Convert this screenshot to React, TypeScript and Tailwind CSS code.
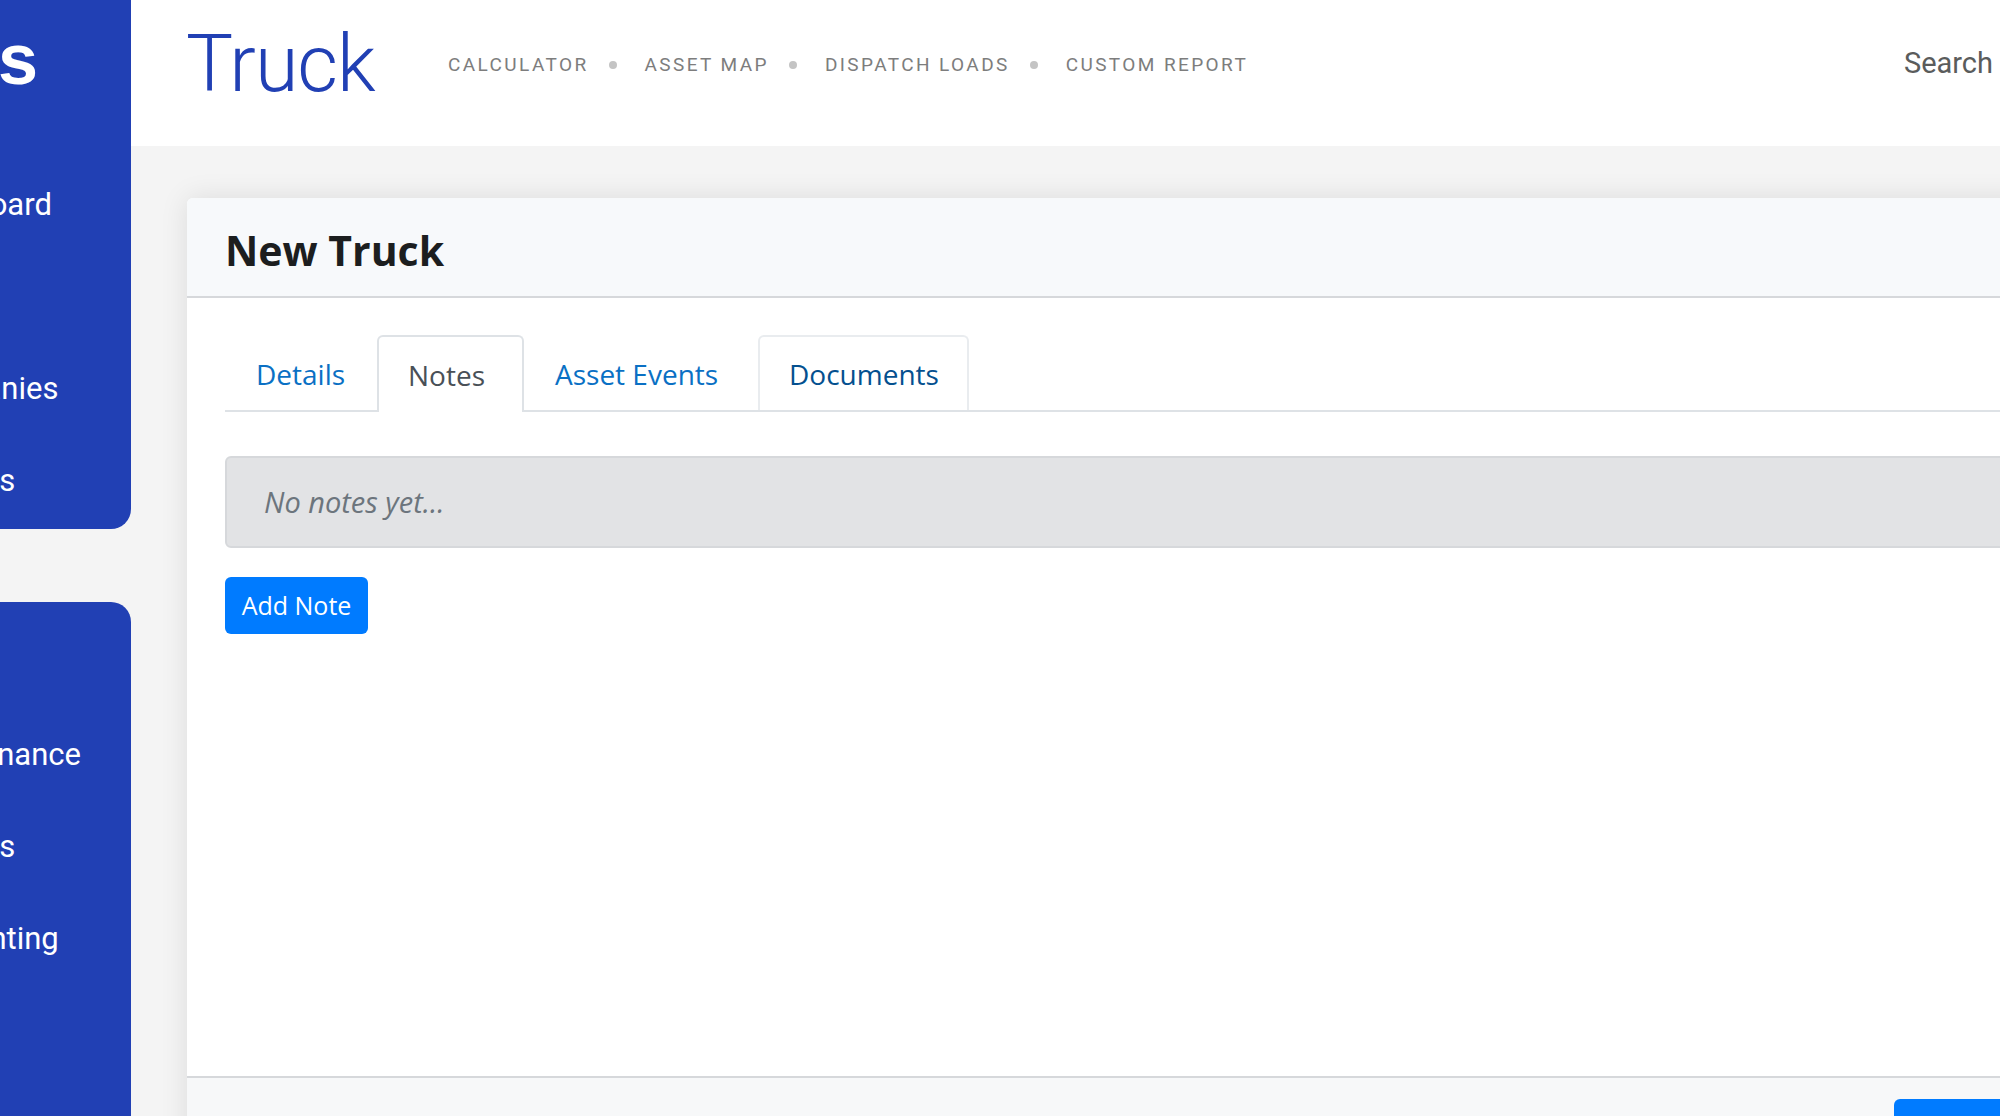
const SEGOE = "font-['Open_Sans',sans-serif]";

function SideItem({ label, className = "" }: { label: string; className?: string }) {
  return (
    <div
      className={`ml-[-98px] flex h-[92px] items-center whitespace-nowrap text-[31px] leading-none text-white font-['Roboto',sans-serif] ${className}`}
    >
      {label}
    </div>
  );
}

function Sidebar() {
  return (
    <aside className="flex w-[131px] shrink-0 flex-col gap-[73px] overflow-hidden">
      <div className="h-[529px] shrink-0 overflow-hidden rounded-br-[20px] bg-[#2140b4] pt-[14px]">
        <div className="ml-[-194px] flex h-[90px] items-center whitespace-nowrap text-[72px] font-bold leading-none text-white font-['Liberation_Sans',sans-serif]">
          Trucks
        </div>
        <div className="mt-[54px]">
          <SideItem label="Dashboard" />
          <SideItem label="" />
          <SideItem label="Companies" />
          <SideItem label="Settings" />
        </div>
      </div>
      <div className="h-[600px] shrink-0 overflow-hidden rounded-tr-[20px] bg-[#2140b4] pt-[106px]">
        <SideItem label="Maintenance" />
        <SideItem label="Settings" />
        <SideItem label="Accounting" />
      </div>
    </aside>
  );
}

function NavDot() {
  return <span className="ml-[20px] mr-[28px] h-[8px] w-[8px] shrink-0 rounded-full bg-[#c4c4c4]" />;
}

function Header() {
  return (
    <header className="flex h-[146px] shrink-0 items-center bg-white pb-[18px] pl-[55px] pr-[7px] font-['Roboto',sans-serif]">
      <h1 className="w-[262px] shrink-0 text-[79px] font-light leading-none text-[#2140b4] tracking-[-1px]">Truck</h1>
      <nav className="mt-[2px] flex items-center text-[19px] font-normal uppercase tracking-[2.4px] text-[#7d7d7d]">
        <span>Calculator</span>
        <NavDot />
        <span>Asset Map</span>
        <NavDot />
        <span>Dispatch Loads</span>
        <NavDot />
        <span>Custom Report</span>
      </nav>
      <span className="mb-[1px] ml-auto text-[29px] leading-none text-[#5a5c5c]">Search</span>
    </header>
  );
}

function Tabs() {
  return (
    <div className={`flex h-[77px] border-b-2 border-[#dee2e6] text-[28px] ${SEGOE}`}>
      <div className="flex w-[152px] items-center pl-[31px] pt-[2px] text-[#0a70c4]">Details</div>
      <div className="mb-[-2px] flex w-[147px] items-center rounded-t-[6px] border-2 border-b-0 border-[#dee2e6] bg-white pl-[29px] text-[#495057]">
        Notes
      </div>
      <div className="flex w-[234px] items-center pl-[31px] pt-[2px] text-[#0a70c4]">Asset Events</div>
      <div className="flex w-[211px] items-center rounded-t-[6px] border-2 border-b-0 border-[#e9ecef] pl-[29px] text-[#04508f]">
        Documents
      </div>
    </div>
  );
}

export default function App() {
  return (
    <div className="flex h-[1116px] w-[2000px] overflow-hidden bg-[#f4f4f4]">
      <Sidebar />
      <main className="flex min-w-0 flex-1 flex-col">
        <Header />
        <div className="pl-[56px] pt-[52px]">
          <section className="mr-[-60px] flex h-[960px] flex-col rounded-[6px] bg-white shadow-[0_0_28px_rgba(0,0,0,0.1)]">
            <div className={`flex h-[100px] shrink-0 items-center rounded-t-[6px] border-b-2 border-[#d6d8db] bg-[#f7f9fb] pl-[38px] pt-[8px] text-[41px] font-bold text-[#1c1e1f] ${SEGOE}`}>
              New Truck
            </div>
            <div className="h-[778px] shrink-0 px-[38px] pt-[37px]">
              <Tabs />
              <div className={`mt-[44px] flex h-[92px] items-center rounded-[6px] border-2 border-[#d6d8db] bg-[#e2e3e5] pl-[37px] text-[29px] italic text-[#6c757d] ${SEGOE}`}>
                No notes yet...
              </div>
              <button className={`mt-[29px] h-[57px] w-[143px] rounded-[6px] bg-[#007bff] text-[25px] text-white ${SEGOE}`}>
                Add Note
              </button>
            </div>
            <div className="flex flex-1 items-start justify-end border-t-2 border-[#d6d8db] bg-[#f7f8f9] pt-[21px]">
              <div className="mr-[16px] h-[60px] w-[150px] rounded-[6px] bg-[#007bff]" />
            </div>
          </section>
        </div>
      </main>
    </div>
  );
}
